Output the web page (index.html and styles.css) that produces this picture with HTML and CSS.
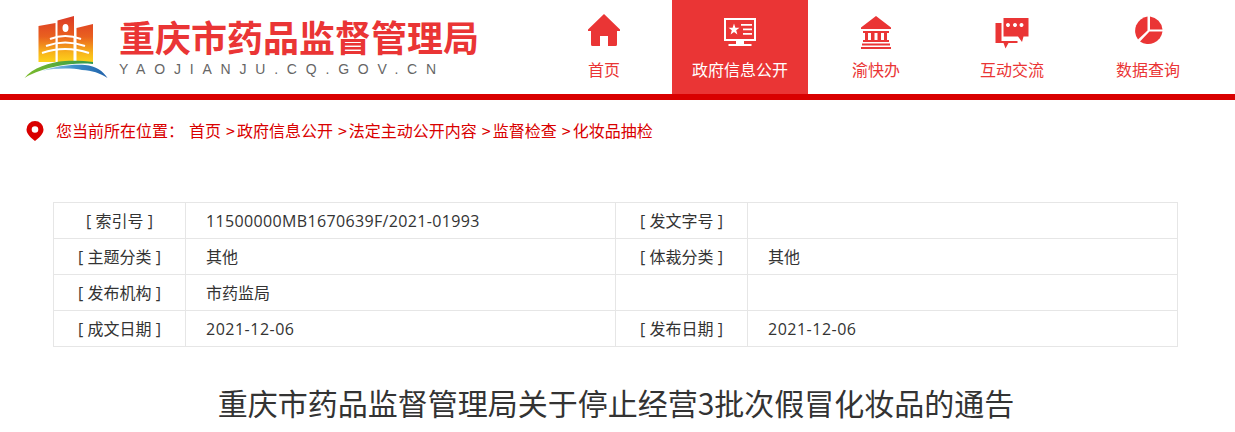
FILE: index.html
```html
<!DOCTYPE html>
<html>
  <head>
    <title>重庆市药品监督管理局</title>
    <meta charset="utf-8">
    <link rel="stylesheet" href="styles.css">
  </head>
  <body>
  <div class="header">
    <div class="logo">
      <svg class="logo-mark" width="90" height="70" viewBox="22 12 90 70">
        <defs>
          <linearGradient id="wall" x1="0" y1="0" x2="0" y2="1">
            <stop offset="0" stop-color="#dc3a26"/>
            <stop offset="0.45" stop-color="#e9601f"/>
            <stop offset="0.8" stop-color="#f8b41a"/>
            <stop offset="1" stop-color="#fdd21c"/>
          </linearGradient>
          <linearGradient id="green" x1="0" y1="0" x2="1" y2="0">
            <stop offset="0" stop-color="#7dbb2a"/>
            <stop offset="1" stop-color="#2f9a50"/>
          </linearGradient>
          <linearGradient id="blue" x1="0" y1="0" x2="1" y2="0">
            <stop offset="0" stop-color="#a8d4ec"/>
            <stop offset="0.5" stop-color="#3d8fca"/>
            <stop offset="1" stop-color="#1f5fa8"/>
          </linearGradient>
        </defs>
        <path fill="url(#wall)" d="M38.500 26L55.500 23V62H38.500ZM57.500 20.500L74 16V62H57.500ZM76.500 28L93 24V62H76.500Z"/>
        <ellipse cx="65.500" cy="28" rx="3" ry="4" fill="#fff"/>
        <path fill="none" stroke="#fff" stroke-width="2" d="M50 39Q65 33 81 39M46 46Q65 39 85 46M42 53Q65 45 89 53"/>
        <path fill="none" stroke="#fff" stroke-width="1" d="M57 36V62M74 36V62"/>
        <path fill="url(#green)" d="M24.500 78C32 68 50 62 65 61C75 60.500 85 61 93 62L93 64C80 63 68 64 58 66C46 68.500 34 72 24.500 78Z"/>
        <path fill="url(#blue)" d="M42 71C55 66 72 64 85 65C96 66 103 71 107.500 78C100 73 92 70.500 82 70C72 68 55 68 42 71Z"/>
      </svg>
      <div class="logo-text">
        <div class="site-name">重庆市药品监督管理局</div>
        <div class="site-url">YAOJIANJU.CQ.GOV.CN</div>
      </div>
    </div>
    <div class="nav">
      <a class="nav-item" href="#">
        <svg class="nav-icon" width="36" height="36" viewBox="0 0 36 36">
          <path fill="currentColor" d="M18 0L34 15.500V17H31V30.500Q31 32 29.500 32H22V22H14V32H6.500Q5 32 5 30.500V17H2V15.500Z"/>
        </svg>
        首页
      </a>
      <a class="nav-item active" href="#">
        <svg class="nav-icon" width="36" height="36" viewBox="0 0 36 36">
          <path fill="none" stroke="currentColor" stroke-width="2" d="M3 5H33V26H3Z"/>
          <path fill="currentColor" d="M14 27H22V30H14ZM6.500 30H29.500V32H6.500Z"/>
          <path fill="currentColor" d="M12 9.500L13.400 13.800H17.500L14.200 16.300L15.400 20.500L12 18L8.600 20.500L9.800 16.300L6.500 13.800H10.600ZM19 10H30V11.800H19ZM21 14.500H30V16.300H21ZM21 19H30V20.800H21Z"/>
        </svg>
        政府信息公开
      </a>
      <a class="nav-item" href="#">
        <svg class="nav-icon" width="36" height="36" viewBox="0 0 36 36">
          <path fill="currentColor" d="M18 2L33 13.500V15H3V13.500ZM5 17H31V19H29V26H31V28H5V26H7V19H5ZM10 19V26H13V19ZM16.500 19V26H19.500V19ZM23 19V26H26V19ZM4 29.500H32V31.500H4ZM3 33H33V35H3Z" fill-rule="evenodd"/>
        </svg>
        渝快办
      </a>
      <a class="nav-item" href="#">
        <svg class="nav-icon" width="36" height="36" viewBox="0 0 36 36">
          <path fill="currentColor" d="M0 9H6V27H22V29H13L10 34.500L8 29H0Z" transform="translate(1.500 0)"/>
          <path fill="currentColor" fill-rule="evenodd" d="M9.500 4H34.500V22.500H29.500L28 28L24 22.500H9.500ZM16 11A2 2 0 1 0 16 11.010ZM23 11A2 2 0 1 0 23 11.010ZM29.500 11A2 2 0 1 0 29.500 11.010Z"/>
        </svg>
        互动交流
      </a>
      <a class="nav-item" href="#">
        <svg class="nav-icon" width="36" height="36" viewBox="0 0 36 36">
          <path fill="currentColor" d="M20 2.500A14.500 14.500 0 0 1 32.500 15.500H20Z"/>
          <path fill="currentColor" d="M17.500 2.500V16.500L8 25.500A14.500 14.500 0 0 1 17.500 2.500Z"/>
          <path fill="currentColor" d="M10 27.500L19.500 17.500H32.500A14.500 14.500 0 0 1 10 27.500Z"/>
        </svg>
        数据查询
      </a>
    </div>
  </div>

  <div class="crumbs">
    <svg class="pin" width="18" height="20" viewBox="0 0 18 20">
      <path fill="#d90000" fill-rule="evenodd" d="M9 0A8.500 8.500 0 0 1 17.500 8.500C17.500 13 13 17 9 20C5 17 .5 13 .5 8.500A8.500 8.500 0 0 1 9 0ZM9 5.200A3.300 3.300 0 1 0 9 11.800A3.300 3.300 0 1 0 9 5.200Z"/>
    </svg>
    <span class="here">您当前所在位置：</span>
    <a href="#">首页</a>
    <a href="#"><span class="sep">&gt;</span>政府信息公开</a>
    <a href="#"><span class="sep">&gt;</span>法定主动公开内容</a>
    <a href="#"><span class="sep">&gt;</span>监督检查</a>
    <a href="#"><span class="sep">&gt;</span>化妆品抽检</a>
  </div>

  <table class="info">
    <tr>
      <td class="label">[ 索引号 ]</td>
      <td class="value code">11500000MB1670639F/2021-01993</td>
      <td class="label">[ 发文字号 ]</td>
      <td class="value"></td>
    </tr>
    <tr>
      <td class="label">[ 主题分类 ]</td>
      <td class="value">其他</td>
      <td class="label">[ 体裁分类 ]</td>
      <td class="value">其他</td>
    </tr>
    <tr>
      <td class="label">[ 发布机构 ]</td>
      <td class="value">市药监局</td>
      <td class="label"></td>
      <td class="value"></td>
    </tr>
    <tr>
      <td class="label">[ 成文日期 ]</td>
      <td class="value date">2021-12-06</td>
      <td class="label">[ 发布日期 ]</td>
      <td class="value date">2021-12-06</td>
    </tr>
  </table>

  <h1 class="title">重庆市药品监督管理局关于停止经营3批次假冒化妆品的通告</h1>
  </body>
</html>
```

FILE: styles.css
```css
* {
  padding: 0;
  margin: 0;
  box-sizing: border-box;
}
html {
  background-color: white;
}
body {
  font-family: "Open Sans", "Noto Sans CJK SC", sans-serif;
  font-size: 16px;
  color: #333;
  overflow: hidden;
}
a {
  text-decoration: none;
  color: inherit;
}
.header {
  height: 100px;
  border-bottom: 6px solid #d90000;
  padding-left: 22px;
  display: flex;
  justify-content: space-between;
  padding-right: 19px;
}
.logo {
  display: flex;
  padding-top: 12px;
}
.logo-mark {
  flex: none;
}
.logo-text {
  margin-left: 7px;
}
.site-name {
  font-family: "Noto Sans CJK SC", sans-serif;
  font-size: 36px;
  font-weight: 700;
  line-height: 48px;
  color: #ea3535;
}
.site-url {
  font-family: "Liberation Sans", sans-serif;
  font-size: 14px;
  letter-spacing: 8.800px;
  line-height: 16px;
  margin-top: 1px;
  color: #666;
}
.nav {
  display: flex;
}
.nav-item {
  width: 136px;
  height: 94px;
  padding-top: 14px;
  text-align: center;
  font-family: "Noto Sans CJK SC", sans-serif;
  font-size: 16px;
  line-height: 24px;
  color: #ea3535;
}
.nav-item.active {
  background-color: #ea3535;
  color: white;
}
.nav-icon {
  display: block;
  margin: 0 auto 7px;
}
.crumbs {
  height: 102px;
  padding: 19px 0 0 26px;
  display: flex;
  align-items: flex-start;
  font-family: "Noto Sans CJK SC", sans-serif;
  line-height: 22px;
  color: #d90000;
  gap: 5px;
}
.pin {
  margin: 2px 7px 0 0;
}
.here {
  margin-right: 0;
}
.sep {
  margin-right: 2px;
}
.info {
  width: 1125px;
  margin-left: 53px;
  border-collapse: collapse;
  table-layout: fixed;
}
.info td {
  height: 36px;
  border: 1px solid #e6e6e6;
}
.label {
  width: 132px;
  padding-bottom: 2px;
  text-align: center;
}
.value {
  padding-left: 20px;
  padding-bottom: 2px;
}
.value.code {
  padding-bottom: 0;
  letter-spacing: .35px;
}
.value.date {
  padding-bottom: 0;
  letter-spacing: .5px;
}
.info td:nth-child(2) {
  width: 430px;
}
.title {
  margin-top: 33px;
  padding-right: 3px;
  text-align: center;
  font-family: "Noto Sans CJK SC", sans-serif;
  font-size: 30px;
  font-weight: 400;
  line-height: 44px;
  color: #333;
}
```
